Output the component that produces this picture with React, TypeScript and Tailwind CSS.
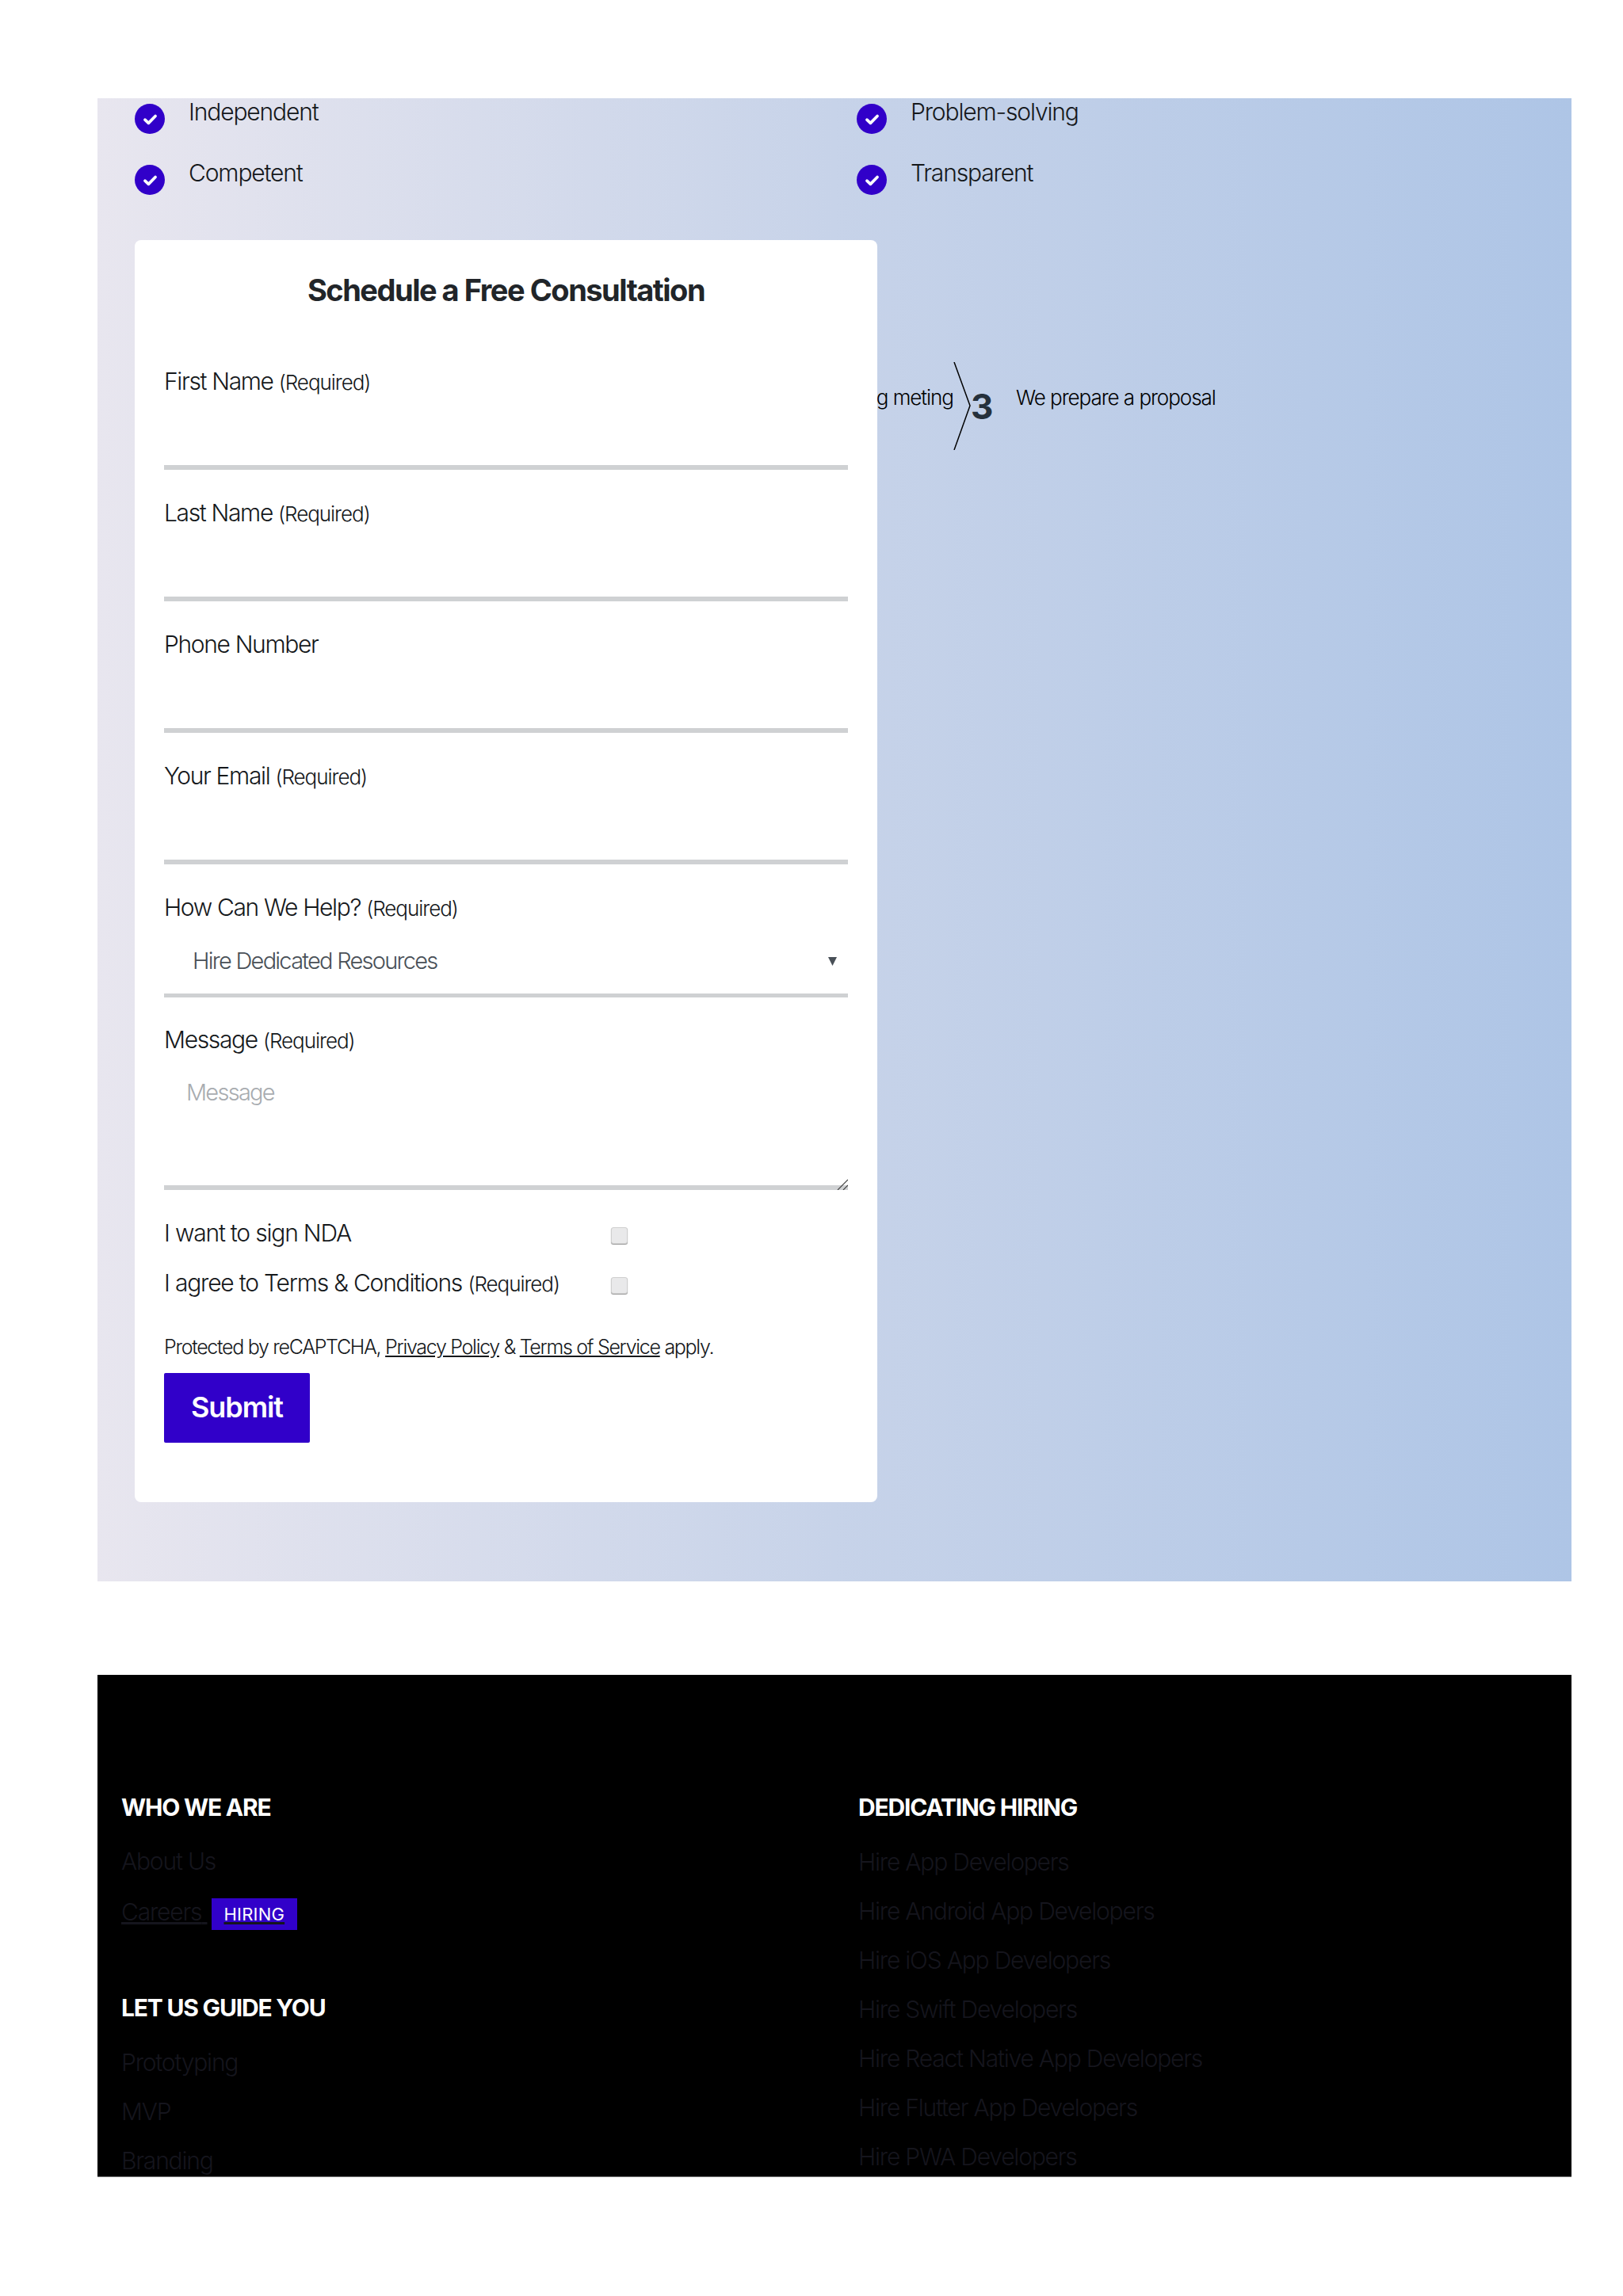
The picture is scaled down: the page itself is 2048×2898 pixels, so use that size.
const Check = () => (
  <span className="flex h-[38px] w-[38px] shrink-0 items-center justify-center rounded-full bg-[#3100c9]">
    <svg viewBox="0 0 16 16" className="h-[21px] w-[21px]" fill="none" stroke="white" strokeWidth="2.8" strokeLinecap="round" strokeLinejoin="round">
      <path d="M3 8.5l3.4 3.2L13 5" />
    </svg>
  </span>
);

const Req = () => <span className="text-[26px] tracking-[-0.04em]">(Required)</span>;

function Feature({ text }: { text: string }) {
  return (
    <div className="flex h-[77px] items-start">
      <Check />
      <span className="ml-[30px] mt-[-12px] text-[30px] font-light leading-[44px] tracking-[-0.038em] text-[#15181b]">{text}</span>
    </div>
  );
}

const labelCls = "block h-[40px] text-[30px] font-light leading-[40px] tracking-[-0.045em] text-[#15181b]";
const checkCls = "mt-[6px] h-[21px] w-[21px] appearance-none rounded-[3px] border border-[#cfcfcf] bg-[#e9e9ea] shadow-[0_1px_1px_#999]";
const checkRow = "flex h-[40px] items-center text-[30px] font-light tracking-[-0.04em] text-[#15181b]";

function Field({ label, required }: { label: string; required?: boolean }) {
  return (
    <div className="mb-[34px]">
      <label className={labelCls}>
        {label} {required && <Req />}
      </label>
      <input type="text" className="block h-[92px] w-full border-b-[6px] border-[#cfd1d3] bg-transparent outline-none" />
    </div>
  );
}

const whoWeAre = ["About Us"];
const guide = ["Prototyping", "MVP", "Branding"];
const hiring = [
  "Hire App Developers",
  "Hire Android App Developers",
  "Hire iOS App Developers",
  "Hire Swift Developers",
  "Hire React Native App Developers",
  "Hire Flutter App Developers",
  "Hire PWA Developers",
];

const footerLink = "block h-[62px] text-[30px] font-light leading-[62px] tracking-[-0.04em] text-[#15151d]";
const footerHead = "h-[40px] text-[30px] font-bold leading-[40px] tracking-[-0.04em] text-white";

export default function App() {
  return (
    <div className="min-h-[2898px] bg-white pb-[150px] pl-[123px] pr-[65px] pt-[124px] [font-family:Inter,sans-serif]">
      <section className="h-[1872px] overflow-hidden bg-gradient-to-r from-[#e8e6ef] via-[#c7d3e9] to-[#aec5e6] pl-[47px] pt-[7px]">
        <div className="grid grid-cols-[911px_1fr]">
          <div>
            <Feature text="Independent" />
            <Feature text="Competent" />
          </div>
          <div>
            <Feature text="Problem-solving" />
            <Feature text="Transparent" />
          </div>
        </div>

        <div className="mt-[18px] flex items-start">
          <form className="h-[1593px] w-[937px] shrink-0 rounded-[8px] bg-white px-[37px] pt-[40px]">
            <h2 className="h-[118px] text-center text-[38px] font-bold leading-[46px] tracking-[-0.039em] text-[#212529]">
              Schedule a Free Consultation
            </h2>
            <Field label="First Name" required />
            <Field label="Last Name" required />
            <Field label="Phone Number" />
            <Field label="Your Email" required />

            <div className="mb-[33px]">
              <label className={labelCls}>
                How Can We Help? <Req />
              </label>
              <div className="relative">
                <select className="block h-[94px] w-full appearance-none border-b-[5px] border-[#cfd1d3] bg-transparent pl-[36px] pt-[6px] text-[29px] font-light tracking-[-0.06em] text-[#495057] outline-none">
                  <option>Hire Dedicated Resources</option>
                </select>
                <svg viewBox="0 0 12 12" className="absolute right-[14px] top-[43px] h-[11px] w-[11px]" fill="#495057">
                  <path d="M0 0h12L6 12z" />
                </svg>
              </div>
            </div>

            <div className="mb-[34px]">
              <label className={labelCls}>
                Message <Req />
              </label>
              <div className="relative">
                <textarea
                  placeholder="Message"
                  className="block h-[170px] w-full resize-none border-b-[6px] border-[#cfd1d3] bg-transparent px-[28px] pt-[25px] text-[29px] font-light leading-[44px] tracking-[-0.06em] outline-none placeholder:text-[#a8acb0]"
                />
                <svg viewBox="0 0 14 14" className="absolute bottom-0 right-0 h-[14px] w-[14px]" fill="none" stroke="#444" strokeWidth="1.2">
                  <path d="M1 14L14 1M8 14l6-6" />
                </svg>
              </div>
            </div>

            <div className={checkRow}>
              <span className="w-[564px]">I want to sign NDA</span>
              <input type="checkbox" className={checkCls} />
            </div>
            <div className={`${checkRow} mt-[23px]`}>
              <span className="w-[564px]">
                I agree to Terms &amp; Conditions <Req />
              </span>
              <input type="checkbox" className={checkCls} />
            </div>

            <p className="mt-[44px] h-[34px] text-[25px] font-light leading-[34px] tracking-[-0.052em] text-[#15181b]">
              Protected by reCAPTCHA, <a className="underline">Privacy Policy</a> &amp; <a className="underline">Terms of Service</a> apply.
            </p>
            <button type="button" className="mt-[16px] h-[88px] w-[184px] rounded-[2px] bg-[#3100c9] pb-[3px] text-[36px] font-semibold tracking-[-0.03em] text-white">
              Submit
            </button>
          </form>

          <div className="mt-[154px] flex h-[111px] items-center">
            <div className="flex w-[96px] justify-end overflow-hidden">
              <span className="mb-[23px] whitespace-nowrap text-[26px] font-light tracking-[-0.04em] text-black">Planning meting</span>
            </div>
            <svg viewBox="0 0 22 111" className="h-[111px] w-[22px] shrink-0" fill="none" stroke="#000" strokeWidth="1.5">
              <path d="M1 0l20 55L1 111" />
            </svg>
            <span className="w-[57px] text-[44px] font-bold leading-none text-[#25303b]">3</span>
            <span className="mb-[23px] whitespace-nowrap text-[26px] font-light tracking-[-0.04em] text-black">We prepare a proposal</span>
          </div>
        </div>
      </section>

      <footer className="mt-[118px] grid h-[634px] grid-cols-[930px_1fr] overflow-hidden border-b border-[#777] bg-black px-[30px] pt-[147px]">
        <div>
          <h3 className={footerHead}>WHO WE ARE</h3>
          <div className="mt-[17px]">
            {whoWeAre.map((l) => (
              <a key={l} className={footerLink}>{l}</a>
            ))}
            <div className="mt-[2px] h-[62px] text-[30px] font-light leading-[62px] tracking-[-0.04em] text-[#15151d]">
              <a className="underline">
                Careers{" "}
                <span className="ml-[5px] bg-[#3100c9] px-[16px] py-[7px] text-[22px] font-normal tracking-[0.01em] text-white">HIRING</span>
              </a>
            </div>
          </div>
          <h3 className={`${footerHead} mt-[70px]`}>LET US GUIDE YOU</h3>
          <div className="mt-[18px]">
            {guide.map((l) => (
              <a key={l} className={footerLink}>{l}</a>
            ))}
          </div>
        </div>
        <div>
          <h3 className={footerHead}>DEDICATING HIRING</h3>
          <div className="mt-[18px]">
            {hiring.map((l) => (
              <a key={l} className={footerLink}>{l}</a>
            ))}
          </div>
        </div>
      </footer>
    </div>
  );
}
